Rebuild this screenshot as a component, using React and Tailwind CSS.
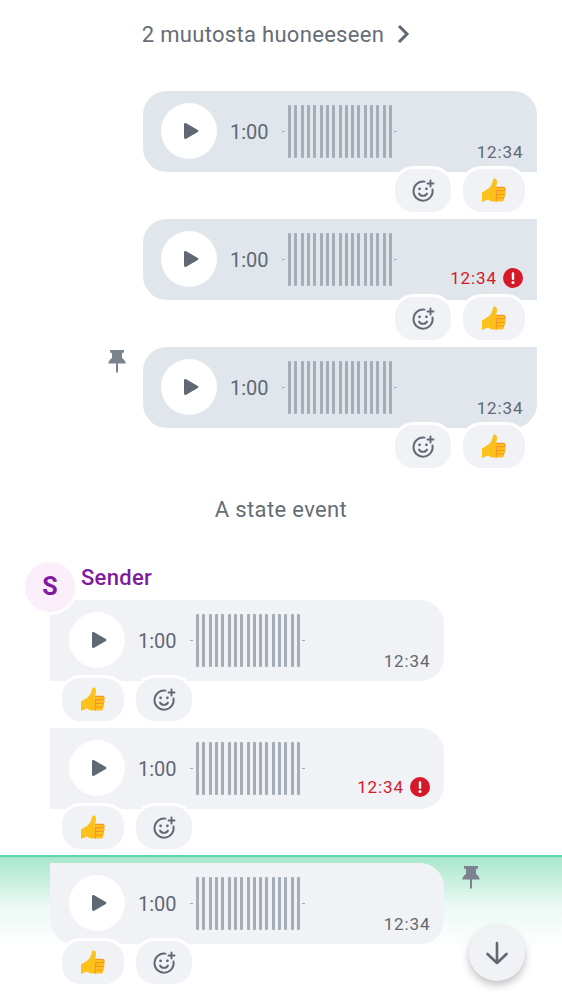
import React from 'react';

const bars = Array.from({length: 17}, (_, i) => i);

const Thumb = () => (
  <svg width="28" height="28" viewBox="0 0 28 28">
    <path d="M2 15.5 L8.5 11.5 C11 9.5 12.5 6.5 13 3 C13.3 1.2 16.2 1 16.8 3.4 C17.4 5.8 16.6 8.2 15.6 10.2 L23 10.2 C25.4 10.2 25.8 12.4 24.8 13.6 C26.2 14.6 26 16.6 24.8 17.4 C25.8 18.6 25.4 20.4 24 21 C24.6 22.6 23.8 24.6 21.6 24.6 L14 24.6 C11.4 24.6 9.6 23.6 8 22.4 L2 25 Z" fill="#fcc21b"/>
    <path d="M16 10.4 L23 10.4 C25 10.4 25.6 12.2 24.8 13.6 L16.2 13.6 M16.6 17.4 L24.8 17.4 M16.6 21 L24 21 M16.6 13.6 L16.2 24.4" fill="none" stroke="#f79329" strokeWidth="1.1"/>
  </svg>
);

const AddReaction = () => (
  <svg width="24" height="24" viewBox="0 0 24 24" fill="none" stroke="#5f6873" strokeWidth="1.9" strokeLinecap="round">
    <path d="M13.5 2.6 A9.6 9.6 0 1 0 21.5 10.4"/>
    <path d="M8 14.5 C9.5 17.6 14.5 17.6 16 14.5"/>
    <circle cx="8.6" cy="9.8" r="1.4" fill="#5f6873" stroke="none"/>
    <circle cx="15.4" cy="9.8" r="1.4" fill="#5f6873" stroke="none"/>
    <path d="M19.5 1.5 V7.5 M16.5 4.5 H22.5"/>
  </svg>
);

const Pin = () => (
  <svg width="20" height="24" viewBox="0 0 20 24" fill="#7b838e">
    <path d="M3 1 H17 V3.4 L15 4 V9 C16.8 10.2 18.4 12 18.8 14.6 H11 V23.5 H9 V14.6 H1.2 C1.6 12 3.2 10.2 5 9 V4 L3 3.4 Z"/>
  </svg>
);

const Reaction = ({children, wide}) => (
  <div className={"flex h-[49px] items-center justify-center rounded-[22px] border-[3px] border-white bg-[#f0f2f5] " + (wide ? "w-[68px]" : "w-[62px]")}>
    {children}
  </div>
);

const Voice = ({error}) => (
  <>
    <div className="flex h-[56px] w-[56px] shrink-0 items-center justify-center rounded-full bg-white">
      <svg className="ml-[3px]" width="16" height="18" viewBox="0 0 16 18" fill="#5f6873">
        <path d="M1 2.4 C1 1.2 2.2 .6 3.2 1.2 L14.8 8 C15.6 8.5 15.6 9.5 14.8 10 L3.2 16.8 C2.2 17.4 1 16.8 1 15.6 Z"/>
      </svg>
    </div>
    <span className="ml-[13px] mt-[1px] w-[39px] text-[20px] leading-[24px] text-[#5f6873]">1:00</span>
    <span className="ml-[13px] h-px w-[3px] bg-[#a6adb7]" />
    <div className="ml-[3px] flex h-[53px] w-[104px] justify-between">
      {bars.map(i => <span key={i} className="h-full w-[3px] rounded-[1px] bg-[#a6adb7]" />)}
    </div>
    <span className="ml-[2px] h-px w-[3px] bg-[#a6adb7]" />
    <div className={"absolute flex items-center gap-[6px] text-[17px] leading-[20px] tracking-[0.9px] " + (error ? "bottom-[12px] right-[14px] text-[#d51928]" : "bottom-[10px] right-[13.5px] text-[#5f6873]")}>
      12:34
      {error && (
        <svg width="20" height="20" viewBox="0 0 20 20">
          <circle cx="10" cy="10" r="10" fill="#d51928"/>
          <rect x="8.8" y="4.2" width="2.4" height="7.8" rx="1.2" fill="#fff"/>
          <circle cx="10" cy="14.6" r="1.5" fill="#fff"/>
        </svg>
      )}
    </div>
  </>
);

const Outgoing = ({corner, error, pin, mt}) => (
  <div className={mt}>
    <div className="flex items-start justify-end pr-[25px]">
      {pin && <div className="mr-[16px] mt-[2px]"><Pin /></div>}
      <div className={"relative flex h-[81px] w-[394px] items-center bg-[#e1e6ec] pb-[1px] pl-[18px] " + corner}>
        <Voice error={error} />
      </div>
    </div>
    <div className="relative mt-[-6px] flex justify-end gap-[6px] pr-[34px]">
      <Reaction><AddReaction /></Reaction>
      <Reaction wide><Thumb /></Reaction>
    </div>
  </div>
);

const Incoming = ({corner, error, mt}) => (
  <div className={mt}>
    <div className={"relative ml-[50px] flex h-[81px] w-[394px] items-center bg-[#f0f2f5] pb-[1px] pl-[19px] " + corner}>
      <Voice error={error} />
    </div>
    <div className="relative mt-[-6px] ml-[59px] flex gap-[6px]">
      <Reaction wide><Thumb /></Reaction>
      <Reaction><AddReaction /></Reaction>
    </div>
  </div>
);

export default function App() {
  return (
    <div className="relative h-[1000px] w-[562px] overflow-hidden bg-white font-['Roboto',sans-serif]">
      <div className="flex h-[68px] items-center justify-center gap-[8px] pr-[6px] text-[22px] tracking-[0.3px] text-[#656d77]">
        <span>2 muutosta huoneeseen</span>
        <svg width="22" height="22" viewBox="0 0 22 22" fill="none" stroke="#5f6873" strokeWidth="3">
          <path d="M7 3 L15 11 L7 19"/>
        </svg>
      </div>

      <Outgoing mt="mt-[23px]" corner="rounded-l-[24px] rounded-tr-[24px]" />
      <Outgoing mt="mt-[4px]" corner="rounded-l-[24px]" error />
      <Outgoing mt="mt-[4px]" corner="rounded-l-[24px] rounded-br-[24px]" pin />

      <div className="mt-[25px] text-center text-[22px] leading-[28px] tracking-[0.35px] text-[#656d77]">A state event</div>

      <div className="relative mt-[39px] flex h-[44px] pl-[81px] pt-[2px] text-[22px] font-medium leading-[26px] tracking-[0.3px] text-[#821a9f]">
        Sender
        <div className="absolute left-[22px] top-[-4px] z-10 flex h-[56px] w-[56px] items-center justify-center rounded-full border-[3px] border-white bg-[#faeefb] text-[25px] font-bold text-[#821a9f]">S</div>
      </div>
      <Incoming mt="mt-[-7px]" corner="rounded-r-[24px]" />
      <Incoming mt="mt-[4px]" corner="rounded-r-[24px]" error />
      <div className="mt-[3px] border-t-[2px] border-[#5cd6a8] bg-gradient-to-b from-[#a8e6cd] via-[#ecf9f4] via-[50px] to-white to-[90px] pt-[6px]">
        <div className="flex items-start">
          <div className="relative ml-[50px] flex h-[81px] w-[394px] items-center rounded-r-[24px] rounded-bl-[24px] bg-[#f0f2f5] pb-[1px] pl-[19px]">
            <Voice />
          </div>
          <div className="ml-[17px] mt-[2px]"><Pin /></div>
        </div>
        <div className="relative mt-[-6px] ml-[59px] flex gap-[6px]">
          <Reaction wide><Thumb /></Reaction>
          <Reaction><AddReaction /></Reaction>
        </div>
      </div>

      <div className="absolute left-[469px] top-[925px] flex h-[56px] w-[56px] items-center justify-center rounded-full bg-[#f0f2f5] shadow-[0_4px_8px_rgba(0,0,0,0.25)]">
        <svg width="28" height="28" viewBox="0 0 28 28" fill="none" stroke="#5f6873" strokeWidth="2.6" strokeLinecap="round" strokeLinejoin="round">
          <path d="M14 4 V24 M4.5 15 L14 24 L23.5 15"/>
        </svg>
      </div>
    </div>
  );
}
